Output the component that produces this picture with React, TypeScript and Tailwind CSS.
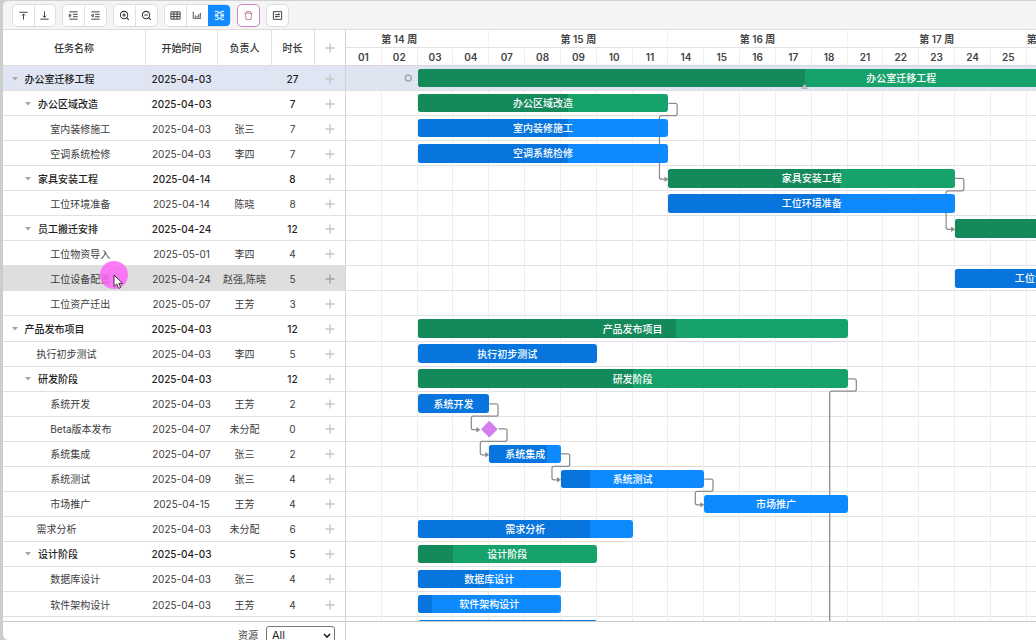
import React from "react";
import { clsx } from "clsx";
import { ZoomIn, ZoomOut } from "lucide-react";

const DAY = 35.83;
const ROW = 25.05;

type Task = {
  name: string;
  date: string;
  owner?: string;
  days: number;
  level: number;
  parent?: boolean;
  milestone?: boolean;
  // offset in visible columns and completed share
  start?: number;
  progress?: number;
};

const tasks: Task[] = [
  { name: "办公室迁移工程", date: "2025-04-03", days: 27, level: 0, parent: true, start: 2, progress: 0.4 },
  { name: "办公区域改造", date: "2025-04-03", days: 7, level: 1, parent: true, start: 2, progress: 0.6 },
  { name: "室内装修施工", date: "2025-04-03", owner: "张三", days: 7, level: 2, start: 2, progress: 0.6 },
  { name: "空调系统检修", date: "2025-04-03", owner: "李四", days: 7, level: 2, start: 2, progress: 0.6 },
  { name: "家具安装工程", date: "2025-04-14", days: 8, level: 1, parent: true, start: 9, progress: 0.6 },
  { name: "工位环境准备", date: "2025-04-14", owner: "陈晓", days: 8, level: 2, start: 9, progress: 0.6 },
  { name: "员工搬迁安排", date: "2025-04-24", days: 12, level: 1, parent: true, start: 17, progress: 0.5 },
  { name: "工位物资导入", date: "2025-05-01", owner: "李四", days: 4, level: 2 },
  { name: "工位设备配置", date: "2025-04-24", owner: "赵强,陈晓", days: 5, level: 2, start: 17, progress: 0.8 },
  { name: "工位资产迁出", date: "2025-05-07", owner: "王芳", days: 3, level: 2 },
  { name: "产品发布项目", date: "2025-04-03", days: 12, level: 0, parent: true, start: 2, progress: 0.6 },
  { name: "执行初步测试", date: "2025-04-03", owner: "李四", days: 5, level: 1, start: 2, progress: 1 },
  { name: "研发阶段", date: "2025-04-03", days: 12, level: 1, parent: true, start: 2, progress: 0.5 },
  { name: "系统开发", date: "2025-04-03", owner: "王芳", days: 2, level: 2, start: 2, progress: 1 },
  { name: "Beta版本发布", date: "2025-04-07", owner: "未分配", days: 0, level: 2, start: 4, milestone: true },
  { name: "系统集成", date: "2025-04-07", owner: "张三", days: 2, level: 2, start: 4, progress: 0.8 },
  { name: "系统测试", date: "2025-04-09", owner: "张三", days: 4, level: 2, start: 6, progress: 0.2 },
  { name: "市场推广", date: "2025-04-15", owner: "王芳", days: 4, level: 2, start: 10, progress: 0 },
  { name: "需求分析", date: "2025-04-03", owner: "未分配", days: 6, level: 1, start: 2, progress: 0.8 },
  { name: "设计阶段", date: "2025-04-03", days: 5, level: 1, parent: true, start: 2, progress: 0.2 },
  { name: "数据库设计", date: "2025-04-03", owner: "张三", days: 4, level: 2, start: 2, progress: 0.5 },
  { name: "软件架构设计", date: "2025-04-03", owner: "王芳", days: 4, level: 2, start: 2, progress: 0.1 },
  { name: "", date: "", days: 5, level: 2, start: 2, progress: 1 },
];

const days = ["01", "02", "03", "04", "07", "08", "09", "10", "11", "14", "15", "16", "17", "18", "21", "22", "23", "24", "25"];
const weeks = [14, 15, 16, 17];

const SELECTED = 0;
const HOVERED = 8;

const Plus = () => (
  <svg width="10" height="10" viewBox="0 0 10 10" className="shrink-0" stroke="currentColor" strokeWidth="1.4">
    <path d="M5 0.5V9.5M0.5 5H9.5" />
  </svg>
);

const ToolGroup = ({ children, danger }: { children: React.ReactNode; danger?: boolean }) => (
  <div
    className={clsx(
      "flex h-[23px] overflow-hidden rounded-[5px] border bg-white",
      danger ? "border-[#cf84c0]" : "border-[#dedede]"
    )}
  >
    {children}
  </div>
);

const ToolButton = ({ children, active, width = "w-[22px]" }: { children: React.ReactNode; active?: boolean; width?: string }) => (
  <button
    className={clsx(
      "flex h-full items-center justify-center border-l border-[#e2e2e2] first:border-l-0",
      width,
      active ? "border-l-[#108bff] bg-[#108bff] text-white" : "text-[#333]"
    )}
  >
    {children}
  </button>
);

const Icon = ({ d, size = 12 }: { d: string; size?: number }) => (
  <svg width={size} height={size} viewBox="0 0 12 12" fill="none" stroke="currentColor" strokeWidth="1">
    <path d={d} />
  </svg>
);

const Toolbar = () => (
  <div className="flex h-[30px] shrink-0 items-center gap-[6px] border-b border-[#dcdcdc] bg-[#f4f4f4] pt-px pl-[8.5px]">
    <ToolGroup>
      <ToolButton width="w-[21px]">
        <Icon d="M1.5 2.5H10.5M6 10.5V4.5M4.3 6L6 4.3L7.7 6" size={11} />
      </ToolButton>
      <ToolButton width="w-[21px]">
        <Icon d="M1.5 10H10.5M6 1.5V8M4.3 6.3L6 8L7.7 6.3" size={11} />
      </ToolButton>
    </ToolGroup>
    <ToolGroup>
      <ToolButton width="w-[21px]">
        <Icon d="M1.5 2H10.5M5.5 4.7H10.5M5.5 7.3H10.5M1.5 10H10.5M1.5 4.5L3.5 6L1.5 7.5Z" size={11} />
      </ToolButton>
      <ToolButton>
        <Icon d="M1.5 2H10.5M5.5 4.7H10.5M5.5 7.3H10.5M1.5 10H10.5M3.5 4.5L1.5 6L3.5 7.5Z" size={11} />
      </ToolButton>
    </ToolGroup>
    <ToolGroup>
      <ToolButton width="w-[21px]">
        <ZoomIn size={11} strokeWidth={2.2} />
      </ToolButton>
      <ToolButton>
        <ZoomOut size={11} strokeWidth={2.2} />
      </ToolButton>
    </ToolGroup>
    <ToolGroup>
      <ToolButton width="w-[21px]">
        <Icon d="M1 2H11V10H1ZM1 4.5H11M1 7.2H11M4.3 2V10M7.7 2V10" size={11} />
      </ToolButton>
      <ToolButton>
        <Icon d="M1.5 2V10H11M4 9V6.5M6 9V7M8 9V5M10 9V3.5" size={10} />
      </ToolButton>
      <ToolButton active>
        <Icon d="M1 1.5H4.5V4.5H1M1 7.5H4.5V10.5H1M11 1.5H7.5V4.5H11M11 7.5H7.5V10.5H11M4.5 3H7.5M4.5 9H7.5M1 6H5M7 6H11" size={11} />
      </ToolButton>
    </ToolGroup>
    <ToolGroup danger>
      <ToolButton width="w-[21px]">
        <span className="flex text-[#b98489]">
          <Icon d="M1.5 3.5H10.5M4 3.5V1.8H8V3.5M2.7 3.5L3.2 10.3H8.8L9.3 3.5" size={11} />
        </span>
      </ToolButton>
    </ToolGroup>
    <ToolGroup>
      <ToolButton width="w-[21px]">
        <Icon d="M1.5 1.8H10.5V10.2H1.5ZM3.5 5H8.5L7 3.7M8.5 7H3.5L5 8.3" size={11} />
      </ToolButton>
    </ToolGroup>
  </div>
);

const cell = "flex items-center justify-center";

const TaskTable = () => (
  <div className="flex w-[343px] shrink-0 flex-col border-r border-[#d4d4d4]">
    <div className="flex h-[36px] shrink-0 border-b border-[#dcdcdc] font-medium text-[#333]">
      <div className={clsx(cell, "w-[143px] border-r border-[#e2e2e2]")}>任务名称</div>
      <div className={clsx(cell, "w-[72px] border-r border-[#e2e2e2]")}>开始时间</div>
      <div className={clsx(cell, "w-[54px] border-r border-[#e2e2e2]")}>负责人</div>
      <div className={clsx(cell, "w-[43px] border-r border-[#e2e2e2] pr-px")}>时长</div>
      <div className={clsx(cell, "w-[30px] text-[#c4c4c4]")}>
        <Plus />
      </div>
    </div>
    {tasks.map((task, i) => (
      <div
        key={i}
        className={clsx(
          "flex h-[25.05px] shrink-0 border-b border-[#e1e1e1] pt-px",
          task.parent ? "font-medium text-[#1f1f1f]" : "text-[#3c3c3c]",
          i === SELECTED && "bg-[#e0e5f3]",
          i === HOVERED && "bg-[#dedede]"
        )}
      >
        <div
          className={clsx(
            "flex w-[143px] items-center gap-[7px] whitespace-nowrap",
            task.parent && task.level === 0 && "pl-[8.5px]",
            task.parent && task.level === 1 && "pl-[22px]",
            !task.parent && task.level === 1 && "pl-[33.5px]",
            !task.parent && task.level === 2 && "pl-[47.3px]"
          )}
        >
          {task.parent && (
            <svg width="6" height="4" viewBox="0 0 6 4" className="fill-[#a6a6a6]">
              <path d="M0 0H6L3 3.6Z" />
            </svg>
          )}
          {task.name}
        </div>
        <div className={clsx(cell, "w-[72px] pr-px")}>{task.date}</div>
        <div className={clsx(cell, "w-[54px] pr-px whitespace-nowrap")}>{task.owner}</div>
        <div className={clsx(cell, "w-[43px] pr-[2px]")}>{task.name && task.days}</div>
        <div className={clsx(cell, "w-[30px]", i === HOVERED ? "text-[#a4a4a4]" : "text-[#c6c6c6]")}>
          {task.name && <Plus />}
        </div>
      </div>
    ))}
  </div>
);

const Bar = ({ task }: { task: Task }) => (
  <div
    className={clsx(
      "relative z-10 mt-[2.8px] flex h-[18.6px] shrink-0 overflow-hidden rounded-[3px]",
      task.parent ? "bg-[#17a26b]" : "bg-[#0e8aff]"
    )}
    style={{ marginLeft: (task.start ?? 0) * DAY, width: task.days * DAY }}
  >
    <div
      className={task.parent ? "bg-[#148a5b]" : "bg-[#0875de]"}
      style={{ width: `${(task.progress ?? 0) * 100}%` }}
    />
    <span className="absolute inset-0 flex items-center justify-center font-medium text-white">{task.name}</span>
  </div>
);

const mid = (row: number) => row * ROW + 12.2;

// elbow connector: out of the source, back along the row border, into the target
const link = (x1: number, row1: number, x2: number, row2: number) => {
  const y1 = mid(row1);
  const turn = (row1 + 1) * ROW - 0.5;
  const y2 = mid(row2) + 0.8;
  const right = x1 + 8.7;
  const left = x2 - 9;
  return `M${x1} ${y1}H${right - 2}q2 0 2 2V${turn - 2}q0 2 -2 2H${left + 2}q-2 0 -2 2V${y2 - 2}q0 2 2 2H${x2 - 3}`;
};

const links = [
  { x1: 9 * DAY, r1: 1, x2: 9 * DAY, r2: 4 },
  { x1: 17 * DAY, r1: 4, x2: 17 * DAY, r2: 6 },
  { x1: 4 * DAY, r1: 13, x2: 4 * DAY - 9, r2: 14 },
  { x1: 4 * DAY + 9, r1: 14, x2: 4 * DAY, r2: 15 },
  { x1: 6 * DAY, r1: 15, x2: 6 * DAY, r2: 16 },
  { x1: 10 * DAY, r1: 16, x2: 10 * DAY, r2: 17 },
];

const Chart = () => (
  <div className="flex min-w-0 flex-1 flex-col overflow-hidden">
    <div className="flex h-[36px] shrink-0 flex-col border-b border-[#d6d8de] font-semibold text-[#444]">
      <div className="flex h-[18px] shrink-0 border-b border-[#e2e2e2]">
        {weeks.map((week) => (
          <div
            key={week}
            className={clsx(cell, "w-[179.15px] shrink-0 border-r border-[#f3f3f3] first:-ml-[35.83px]")}
          >
            第 {week} 周
          </div>
        ))}
        <div className="flex w-[35.83px] shrink-0 items-center whitespace-nowrap">第 18 周</div>
      </div>
      <div className="flex flex-1 pt-px">
        {days.map((day) => (
          <div key={day} className={clsx(cell, "w-[35.83px] shrink-0 border-r border-[#eeeeee]")}>
            {day}
          </div>
        ))}
      </div>
    </div>

    <div className="relative">
      <div className="absolute inset-y-0 left-0 flex">
        {days.map((day) => (
          <div key={day} className="w-[35.83px] shrink-0 border-r border-[#eeeeee]" />
        ))}
      </div>
      {tasks.map((task, i) => (
        <div
          key={i}
          className={clsx("flex h-[25.05px] border-b border-[#e1e1e1]", i === SELECTED && "relative bg-[#dfe4f1]")}
        >
          {task.start !== undefined && !task.milestone && <Bar task={task} />}
        </div>
      ))}

      <svg className="absolute top-0 left-0" width="690" height="577" fill="none" stroke="#8c8c8c" strokeWidth="1.25">
        {links.map(({ x1, r1, x2, r2 }, i) => (
          <g key={i}>
            <path d={link(x1, r1, x2, r2)} />
            <path
              d={`M${x2 - 4} ${mid(r2) - 1.9}L${x2} ${mid(r2) + 0.8}L${x2 - 4} ${mid(r2) + 3.5}Z`}
              fill="#8c8c8c"
              stroke="none"
            />
          </g>
        ))}
        <path d={`M${14 * DAY} ${mid(12)}h6.7q2 0 2 2V${13 * ROW - 2.5}q0 2 -2 2H${13.5 * DAY + 2}q-2 0 -2 2V577`} />
        <rect x="-6" y="-6" width="12" height="12" rx="1.5" fill="#d37eec" stroke="none" transform={`translate(${4 * DAY} ${mid(14) + 0.3}) rotate(45)`} />
      </svg>

      {/* handles of the selected task */}
      <svg className="absolute top-0 left-0 z-20" width="690" height="25" fill="none">
        <circle cx="62.3" cy="12.1" r="3" stroke="#9a9fac" strokeWidth="1.3" />
        <path d="M455.5 22.5L458.5 18L461.5 22.5Z" fill="#c4c8c6" stroke="#8e9693" strokeWidth="0.5" />
      </svg>
    </div>
  </div>
);

const Footer = () => (
  <div className="flex h-[19px] shrink-0 border-t border-[#cccccc] bg-white">
    <div className="flex w-[343px] shrink-0 items-start border-r border-[#d4d4d4] pt-[4px] pl-[235px] text-[#444]">
      <span className="mt-[4px] w-[28px]">资源</span>
      <div className="flex h-[20px] w-[69px] shrink-0 items-start justify-between rounded-[3px] border border-[#777] bg-white pt-[3px] pr-[3px] pl-[5px] text-[11px] text-[#222]">
        All
        <svg width="8" height="8" viewBox="0 0 8 8" className="mt-[2px]" fill="none" stroke="#222" strokeWidth="1.6">
          <path d="M1 2L4 5L7 2" />
        </svg>
      </div>
    </div>
  </div>
);

export default function App() {
  return (
    <div className="relative h-[640px] w-[1036px] overflow-hidden bg-[#cdcdcd] pl-[3px] font-['Inter','Noto_Sans_CJK_SC',sans-serif] text-[10px] leading-none">
      <div className="flex h-full flex-col overflow-hidden rounded-l-[6px] border-t border-[#d0d0d0] bg-white">
        <div className="-mt-px flex min-h-0 flex-1 flex-col overflow-hidden">
          <Toolbar />
          <div className="flex min-h-0 flex-1 overflow-hidden">
            <TaskTable />
            <Chart />
          </div>
          <Footer />
        </div>
      </div>

      {/* pointer */}
      <div className="absolute top-[261px] left-[99.5px] h-[28px] w-[28px] rounded-full bg-[#ff66f7]/85" />
      <svg className="absolute top-[274px] left-[113px]" width="11" height="16" viewBox="0 0 11 16">
        <path d="M1 1V12.5L3.7 10L5.6 14.4L7.7 13.5L5.9 9.3H9.6Z" fill="#fff" stroke="#333" strokeWidth="1" />
      </svg>
    </div>
  );
}
